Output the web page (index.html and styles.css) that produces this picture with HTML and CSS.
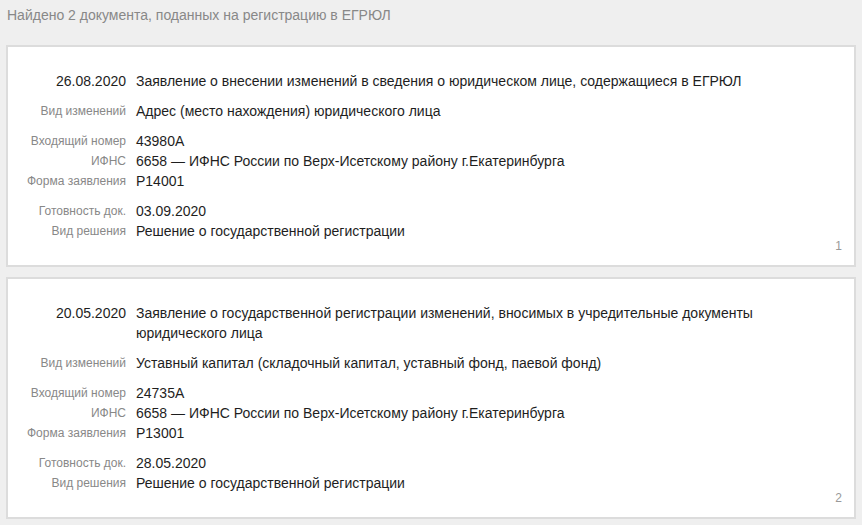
FILE: index.html
```html
<!DOCTYPE html>
<html lang="ru">
<head>
<meta charset="utf-8">
<link rel="stylesheet" href="styles.css">
</head>
<body>
<div class="page">
  <div class="header">Найдено 2 документа, поданных на регистрацию в ЕГРЮЛ</div>

  <div class="card">
    <div class="grid">
      <div class="date">26.08.2020</div>
      <div class="val">Заявление о внесении изменений в сведения о юридическом лице, содержащиеся в ЕГРЮЛ</div>
    </div>
    <div class="grid group first">
      <div class="lbl">Вид изменений</div>
      <div class="val">Адрес (место нахождения) юридического лица</div>
    </div>
    <div class="grid group">
      <div class="lbl">Входящий номер</div>
      <div class="val">43980А</div>
      <div class="lbl">ИФНС</div>
      <div class="val">6658 — ИФНС России по Верх-Исетскому району г.Екатеринбурга</div>
      <div class="lbl">Форма заявления</div>
      <div class="val">Р14001</div>
    </div>
    <div class="grid group">
      <div class="lbl">Готовность док.</div>
      <div class="val">03.09.2020</div>
      <div class="lbl">Вид решения</div>
      <div class="val">Решение о государственной регистрации</div>
    </div>
    <div class="num">1</div>
  </div>

  <div class="card">
    <div class="grid">
      <div class="date">20.05.2020</div>
      <div class="val">Заявление о государственной регистрации изменений, вносимых в учредительные документы юридического лица</div>
    </div>
    <div class="grid group first">
      <div class="lbl">Вид изменений</div>
      <div class="val">Уставный капитал (складочный капитал, уставный фонд, паевой фонд)</div>
    </div>
    <div class="grid group">
      <div class="lbl">Входящий номер</div>
      <div class="val">24735А</div>
      <div class="lbl">ИФНС</div>
      <div class="val">6658 — ИФНС России по Верх-Исетскому району г.Екатеринбурга</div>
      <div class="lbl">Форма заявления</div>
      <div class="val">Р13001</div>
    </div>
    <div class="grid group">
      <div class="lbl">Готовность док.</div>
      <div class="val">28.05.2020</div>
      <div class="lbl">Вид решения</div>
      <div class="val">Решение о государственной регистрации</div>
    </div>
    <div class="num">2</div>
  </div>
</div>
</body>
</html>
```

FILE: styles.css
```css
html, body {
  margin: 0;
  padding: 0;
  background: #efefef;
}
body {
  font-family: "Liberation Sans", Arial, sans-serif;
  color: #222;
}
.page {
  padding: 5px 6px 0 6px;
}
.header {
  font-size: 14px;
  line-height: 20px;
  color: #888;
  padding-left: 1px;
  margin-bottom: 20px;
}
.card {
  position: relative;
  background: #fff;
  border: 2px solid #dcdcdc;
  padding: 24px 60px 24px 0;
  margin-bottom: 10px;
}
.grid {
  display: grid;
  grid-template-columns: 118px 1fr;
  column-gap: 10px;
  font-size: 14px;
  line-height: 20px;
}
.group {
  margin-top: 10px;
}
.group.first {
  margin-top: 10px;
}
.date {
  text-align: right;
  color: #1e1e1e;
}
.lbl {
  text-align: right;
  font-size: 12px;
  color: #888;
}
.val {
  color: #1e1e1e;
}
.num {
  position: absolute;
  right: 12px;
  bottom: 12px;
  font-size: 12px;
  line-height: 14px;
  color: #999;
}
```
